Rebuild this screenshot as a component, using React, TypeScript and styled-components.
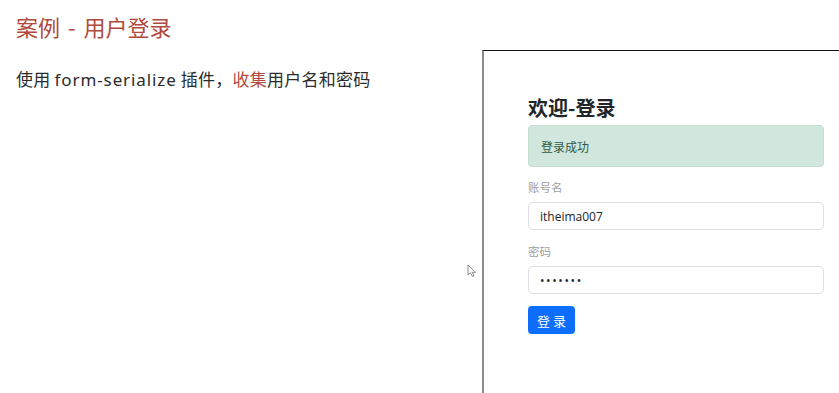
import styled, { createGlobalStyle } from 'styled-components';

const GlobalStyle = createGlobalStyle`
  html, body {
    margin: 0;
    padding: 0;
    background: #fff;
    overflow: hidden;
  }
  body {
    font-family: "Noto Sans CJK SC", "Noto Sans", sans-serif;
  }
`;

const Page = styled.div`
  position: relative;
  width: 839px;
  height: 393px;
  display: flex;
  flex-direction: row;
`;

const Slide = styled.div`
  width: 482px;
  padding: 11px 0 0 16px;
  box-sizing: border-box;

  h1 {
    margin: 0;
    font-size: 22px;
    line-height: 30px;
    font-weight: normal;
    word-spacing: 3px;
    color: #b04a3c;
  }
  p {
    margin: 27px 0 0;
    font-size: 17px;
    line-height: 22px;
    letter-spacing: 0.25px;
    color: #2b2b2b;
  }
  em {
    font-style: normal;
    color: #b04a3c;
  }
`;

const Latin = styled.span`
  font-family: "Noto Sans", sans-serif;
  letter-spacing: 0.9px;
`;

const BrowserFrame = styled.div`
  flex: 1;
  margin-top: 50px;
  border-left: 2px solid #8a8a8a;
  border-top: 1px solid #111;
  padding: 44px 0 0 44px;
  box-sizing: border-box;
`;

const LoginForm = styled.form`
  width: 296px;
  display: flex;
  flex-direction: column;
  font-family: "Noto Sans CJK SC", "Noto Sans", sans-serif;
`;

const Heading = styled.h2`
  margin: 0;
  font-size: 20px;
  line-height: 26px;
  font-weight: bold;
  color: #212529;
`;

const Alert = styled.div`
  margin-top: 4px;
  height: 42px;
  box-sizing: border-box;
  display: flex;
  align-items: center;
  padding: 0 12px;
  background: #d1e7dd;
  border: 1px solid #c4ddd1;
  border-radius: 4px;
  color: #2f5a45;
  font-size: 12px;
`;

const Label = styled.label<{ $top: number }>`
  margin-top: ${(p) => p.$top}px;
  font-size: 11.5px;
  line-height: 18px;
  color: #a0a0a0;
`;

const Input = styled.input<{ $spread?: boolean }>`
  margin-top: 6px;
  height: 28px;
  box-sizing: border-box;
  padding: 0 11px;
  border: 1px solid #dcdfe3;
  border-radius: 4px;
  font-family: "Open Sans", "Noto Sans", sans-serif;
  font-size: 12px;
  letter-spacing: ${(p) => (p.$spread ? '1.6px' : '0')};
  color: #212529;
  outline: none;
  background: #fff;
`;

const SubmitButton = styled.button`
  margin-top: 12px;
  align-self: flex-start;
  width: 47px;
  height: 28px;
  border: none;
  border-radius: 4px;
  background: #0d6efd;
  color: #fff;
  font-family: "Noto Sans CJK SC", sans-serif;
  font-size: 13px;
  letter-spacing: 3px;
  padding: 0 0 0 3px;
`;

const Cursor = styled.svg`
  position: absolute;
  left: 467px;
  top: 264px;
`;

export default function App() {
  return (
    <Page>
      <GlobalStyle />
      <Slide>
        <h1>案例 - 用户登录</h1>
        <p>
          使用 <Latin>form-serialize</Latin> 插件，<em>收集</em>用户名和密码
        </p>
      </Slide>
      <BrowserFrame>
        <LoginForm onSubmit={(e) => e.preventDefault()}>
          <Heading>欢迎-登录</Heading>
          <Alert>登录成功</Alert>
          <Label $top={11}>账号名</Label>
          <Input type="text" defaultValue="itheima007" />
          <Label $top={12}>密码</Label>
          <Input type="password" defaultValue="1234567" $spread />
          <SubmitButton type="submit">登录</SubmitButton>
        </LoginForm>
      </BrowserFrame>
      <Cursor width="10" height="14" viewBox="0 0 10 14">
        <path d="M1 1 L1 11 L3.5 8.8 L5.5 12.5 L7 11.8 L5.2 8.3 L8.5 8.3 Z" fill="#fff" stroke="#8a8a8a" strokeWidth="1" />
      </Cursor>
    </Page>
  );
}
